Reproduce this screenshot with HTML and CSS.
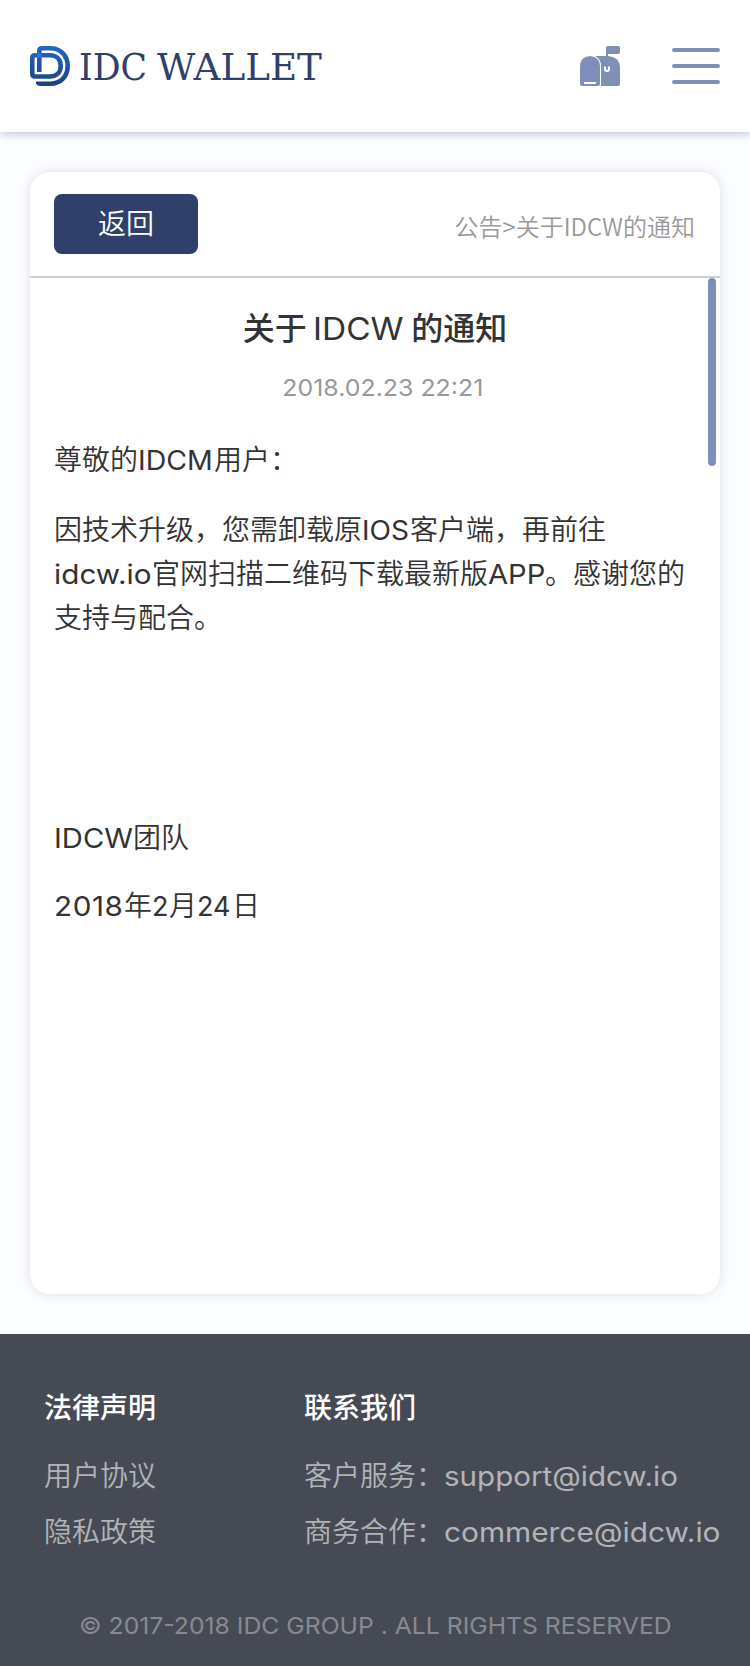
FILE: index.html
```html
<!DOCTYPE html>
<html lang="zh-CN">
<head>
<meta charset="utf-8">
<title>IDC Wallet</title>
<link rel="stylesheet" href="styles.css">
</head>
<body>
<header class="topbar">
  <svg class="logo" width="300" height="48" viewBox="0 0 300 48" role="img" aria-label="IDC Wallet">
    <defs>
      <linearGradient id="blue" gradientUnits="userSpaceOnUse" x1="0" y1="4" x2="0" y2="44">
        <stop offset="0" stop-color="#2567c6"/><stop offset="1" stop-color="#1a427c"/>
      </linearGradient>
    </defs>
    <g fill="none" stroke="url(#blue)" stroke-width="4.600">
      <path d="M9.300 30V9Q9.300 6.300 12 6.300H20C31 6.300 37.700 14 37.700 24S31 41.700 20 41.700H11Q8 41.700 8 39.500"/>
      <path d="M5 13.300H20C27 13.300 30.700 18 30.700 24S27 34.500 20 34.500H5Q2.300 34.500 2.300 31.500V16Q2.300 13.300 5 13.300Z"/>
    </g>
    <path fill="#2e74dc" d="M7 11H11.600V15.600H7Z"/>
    <text class="logo-text" x="49" y="38" textLength="68" lengthAdjust="spacingAndGlyphs">IDC</text>
    <text class="logo-text" x="127" y="38" textLength="165" lengthAdjust="spacingAndGlyphs">WALLET</text>
  </svg>
  <div class="actions">
    <svg width="40" height="40" viewBox="0 0 40 40">
      <path fill="#7f8fb7" d="M26 10V2Q26 0 28 0H38Q40 0 40 2V6Q40 8 38 8H28V10Q40 11 40 22V38Q40 40 38 40H21V20Q21 13 15 10Z"/>
      <path fill="#7f8fb7" d="M10 10Q20 11 20 20V38Q20 40 18 40H2Q0 40 0 38V20Q0 11 10 10Z"/>
      <path stroke="#fff" stroke-width="2" d="M4 37H16"/>
      <path fill="none" stroke="#fff" stroke-width="2" d="M25 20.500V23A2 2 0 0 0 29 23V20.500"/>
    </svg>
    <div class="menu"><i></i><i></i><i></i></div>
  </div>
</header>
<main class="card">
  <div class="card-head">
    <a class="back">返回</a>
    <span class="crumb">公告&gt;关于IDCW的通知</span>
  </div>
  <div class="card-body">
    <div class="scroll-thumb"></div>
    <h1 class="title">关于 <span class="lat l-title">IDCW</span> 的通知</h1>
    <div class="date"><span class="lat l-date">2018.02.23 22:21</span></div>
    <div class="article">
      <p>尊敬的<span class="lat l-idcm">IDCM</span>用户：</p>
      <p>因技术升级，您需卸载原<span class="lat l-ios">IOS</span>客户端，再前往<br><span class="lat l-site">idcw.io</span>官网扫描二维码下载最新版<span class="lat l-app">APP</span>。感谢您的<br>支持与配合。</p>
      <p class="sign"><span class="lat l-idcw">IDCW</span>团队</p>
      <p class="day"><span class="lat l-year">2018</span>年<span class="lat l-month">2</span>月<span class="lat l-dd">24</span>日</p>
    </div>
  </div>
</main>
<footer class="footer">
  <div class="cols">
    <div class="col legal"><h2>法律声明</h2><a>用户协议</a><a>隐私政策</a></div>
    <div class="col"><h2>联系我们</h2><a>客户服务：<span class="lat l-sup">support@idcw.io</span></a><a>商务合作：<span class="lat l-com">commerce@idcw.io</span></a></div>
  </div>
  <div class="copy"><span class="lat l-copy">© 2017-2018 IDC GROUP . ALL RIGHTS RESERVED</span></div>
</footer>
</body>
</html>
```
FILE: styles.css
```css
* { box-sizing: border-box; }
body { margin: 0; background: #fcfdff; color: #333; font-family: "Noto Sans CJK SC DemiLight", "Noto Sans CJK SC", sans-serif; font-weight: 350; }
h1, h2, p { margin: 0; }
h1, h2 { font-family: "Noto Sans CJK SC", sans-serif; }
.lat { display: inline-block; font-family: Inter, sans-serif; font-weight: 400; line-height: 1; white-space: nowrap; font-size: 27px; text-align: left; transform-origin: 0 50%; }
.topbar { position: relative; height: 132px; padding: 0 30px; display: flex; align-items: center; justify-content: space-between; background: #fff; box-shadow: 0 2px 8px rgba(48, 64, 105, .3); }
.logo { display: block; }
.logo-text { font-family: "DejaVu Serif", serif; font-size: 38px; font-weight: 400; fill: #30406b; }
.actions { display: flex; align-items: center; gap: 52px; }
.actions svg { display: block; }
.menu { width: 48px; display: grid; gap: 12px; }
.menu i { height: 4px; border-radius: 2px; background: #7f8fb7; }
.card { margin: 40px 30px; height: 1122px; border-radius: 20px; background: #fff; box-shadow: 0 0 12px rgba(48, 64, 105, .16); }
.card-head { height: 106px; padding: 22px 25px 0 24px; display: flex; justify-content: space-between; border-bottom: 2px solid #c5cfe9; }
.back { width: 144px; height: 60px; border-radius: 8px; background: #30406b; color: #fff; font-size: 28px; line-height: 56px; text-align: center; }
.crumb { font-size: 24px; line-height: 64px; color: #999; }
.card-body { position: relative; padding: 24px 24px 0; }
.scroll-thumb { position: absolute; top: 0; right: 4px; width: 8px; height: 188px; border-radius: 4px; background: #7f8fb7; }
.title { font-size: 32px; line-height: 48px; font-weight: 500; text-align: center; white-space: nowrap; }
.date { margin-top: 16px; padding-left: 15px; text-align: center; font-size: 24px; line-height: 40px; color: #999; }
.article { margin-top: 30px; font-size: 28px; line-height: 44px; white-space: nowrap; }
.article p + p { margin-top: 26px; }
.article .sign { margin-top: 176px; }
.article .day { margin-top: 24px; }
.footer { height: 332px; background: #464a54; color: #b3b4b8; padding: 51px 0 0 44px; font-size: 28px; line-height: 42px; }
.cols { display: flex; white-space: nowrap; }
.legal { width: 260px; }
.col { display: flex; flex-direction: column; }
.col h2 { font-size: 28px; font-weight: 500; color: #fff; margin-bottom: 26px; }
.col a + a { margin-top: 14px; }
.copy { margin: 51px 0 0 35px; font-size: 24px; line-height: 44px; color: #888a91; }
.l-title { font-size: 31px; width: 93px; margin: 0 -2px 0 -1px; transform: scaleX(1.08); }
.l-date { font-size: 23.500px; transform: scaleX(1.06); transform-origin: 50% 50%; }
.l-idcm { width: 76px; transform: scaleX(1.055); }
.l-ios { width: 48px; transform: scaleX(1.04); }
.l-site { width: 98px; transform: scaleX(1.1); }
.l-app { width: 57px; transform: scaleX(1.08); }
.l-idcw { width: 79px; transform: scaleX(1.08); }
.l-year { width: 70px; letter-spacing: .5px; transform: scaleX(1.1); }
.l-month { width: 17px; }
.l-dd { width: 35px; }
.l-sup { transform: scaleX(1.095); }
.l-com { transform: scaleX(1.105); }
.l-copy { font-size: 23.500px; transform: scaleX(1.052); }
```
